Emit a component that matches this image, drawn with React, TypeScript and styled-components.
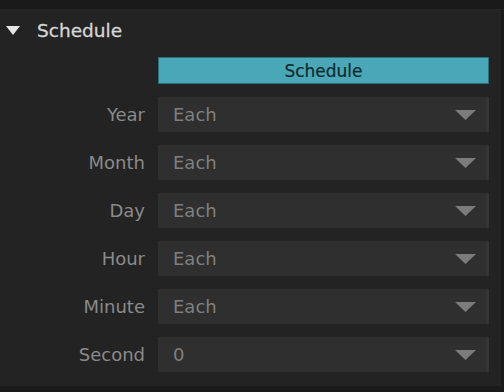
import styled, { createGlobalStyle } from 'styled-components';

const GlobalStyle = createGlobalStyle`
  html, body {
    margin: 0;
    padding: 0;
    background: #1a1a1a;
  }
  body {
    width: 504px;
    height: 392px;
    overflow: hidden;
    font-family: 'DejaVu Sans', 'Liberation Sans', sans-serif;
  }
`;

const fields = [
  { label: 'Year', value: 'Each' },
  { label: 'Month', value: 'Each' },
  { label: 'Day', value: 'Each' },
  { label: 'Hour', value: 'Each' },
  { label: 'Minute', value: 'Each' },
  { label: 'Second', value: '0' },
];

function App() {
  return (
    <Page>
      <GlobalStyle />
      <TopStrip />
      <Panel>
        <Header>
          <Caret width='14' height='9' viewBox='0 0 14 9'>
            <polygon points='0,0 14,0 7,9' fill='#e6e6e6' />
          </Caret>
          <Title>Schedule</Title>
        </Header>
        <Form>
          <span />
          <ScheduleButton>Schedule</ScheduleButton>
          {fields.map((f) => (
            <Row key={f.label}>
              <Label>{f.label}</Label>
              <Select>
                <SelectText>{f.value}</SelectText>
                <svg width='21' height='10' viewBox='0 0 21 10'>
                  <polygon points='0,0 21,0 10.5,10' fill='#7c7c7c' />
                </svg>
              </Select>
            </Row>
          ))}
        </Form>
      </Panel>
    </Page>
  );
}

export default App;

const Page = styled.div`
  display: flex;
  flex-direction: column;
  width: 504px;
  height: 392px;
  background: #1a1a1a;
`;

const TopStrip = styled.div`
  height: 9px;
  background: #1a1a1a;
  border-bottom: 1px solid #262626;
`;

const Panel = styled.div`
  height: 376px;
  margin-right: 3px;
  background: #232323;
  display: flex;
  flex-direction: column;
`;

const Header = styled.div`
  display: flex;
  align-items: center;
  height: 40px;
  padding-left: 6px;
`;

const Caret = styled.svg`
  margin-right: 17px;
  margin-top: 1px;
`;

const Title = styled.span`
  color: #d6d6d6;
  font-size: 18.5px;
  -webkit-text-stroke: 0.3px #d6d6d6;
`;

const Form = styled.div`
  display: grid;
  grid-template-columns: 145px 331px;
  column-gap: 13px;
  row-gap: 13px;
  padding-top: 7px;
`;

const ScheduleButton = styled.div`
  height: 25px;
  background: #4aa7b7;
  border: 1px solid #2f6f7a;
  color: #112a31;
  font-size: 17px;
  -webkit-text-stroke: 0.2px #112a31;
  display: flex;
  align-items: center;
  justify-content: center;
`;

const Row = styled.div`
  display: contents;
`;

const Label = styled.div`
  height: 35px;
  display: flex;
  align-items: center;
  justify-content: flex-end;
  color: #8a8a8a;
  font-size: 18px;
`;

const Select = styled.div`
  height: 35px;
  box-sizing: border-box;
  background: #2f2f2f;
  border-right: 3px solid #363636;
  display: flex;
  align-items: center;
  justify-content: space-between;
  padding: 0 10px 0 15px;
`;

const SelectText = styled.span`
  color: #7f7f7f;
  font-size: 18px;
`;
